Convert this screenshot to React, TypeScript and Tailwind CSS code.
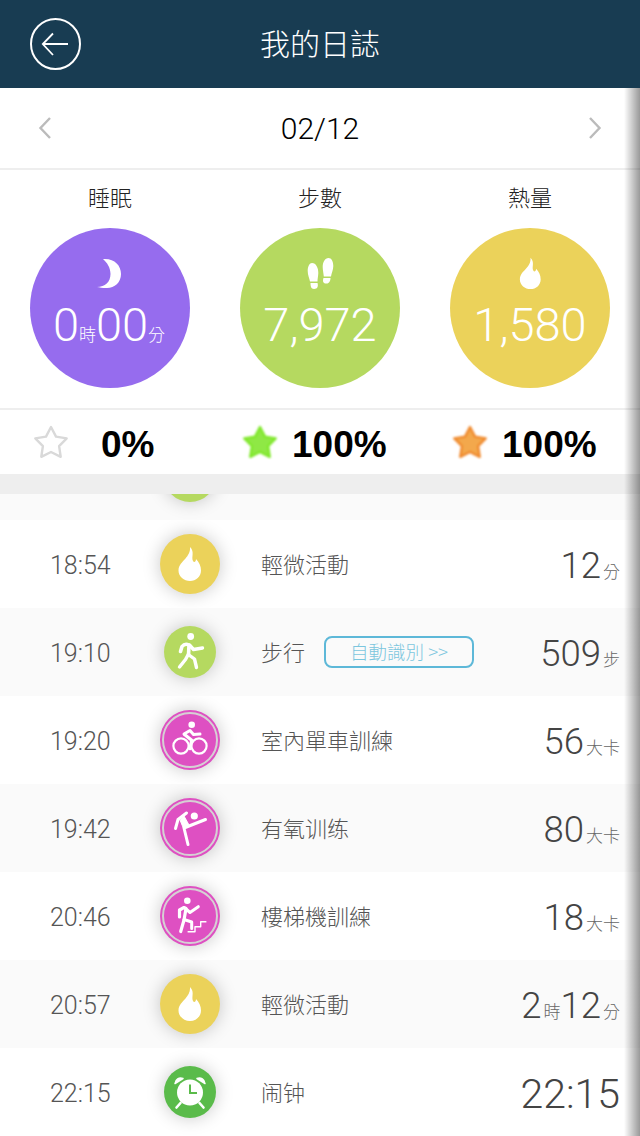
import React from "react";

const SANS = "font-['Roboto','Liberation_Sans','Noto_Sans_CJK_TC',sans-serif]";
const STAR = "M18 3L23 12.6L33.7 14.4L26.100 22.100L27.700 32.800L18 28L8.300 32.800L9.900 22.100L2.300 14.400L13 12.600Z";

const Flame = ({ className }: { className: string }) => (
  <svg viewBox="0 0 40 45" className={className} fill="#fff">
    <path d="M20 7C25 12 21 17 23 21C24 23 26 22 26 19C29 22 31 26 31 30.500C31 36.500 26 41 20 41C14 41 8.500 36.500 8.500 30.500C8.500 25 12.500 22 15.500 18.500C18 15.500 20.500 12 20 7Z" />
  </svg>
);

const Star = ({ fill, stroke, blur }: { fill: string; stroke: string; blur?: boolean }) => (
  <svg viewBox="0 0 36 36" className={`w-[36px] h-[36px] shrink-0 ${blur ? "blur-[0.8px]" : ""}`}>
    <path d={STAR} fill={fill} stroke={stroke} strokeWidth="2.400" strokeLinejoin="round" />
  </svg>
);

const Walk = () => (
  <svg viewBox="0 0 52 52" className="w-[52px] h-[52px]" fill="none" stroke="#fff" strokeWidth="3.400" strokeLinecap="round" strokeLinejoin="round">
    <circle cx="26.700" cy="10.500" r="3.400" fill="#fff" stroke="none" />
    <path d="M16.500 25.500L18 20.500C20 18 23 18 25 19L24.500 29" strokeWidth="3.600" />
    <path d="M25.500 19L29.500 23.500L38.500 22" />
    <path d="M24.500 28L21.500 33.500L15.500 41M25 29L30.500 33L32.500 41.500" />
  </svg>
);

const Bike = () => (
  <svg viewBox="0 0 60 60" className="absolute left-[-4px] top-[-4px] w-[60px] h-[60px]" fill="none" stroke="#fff" strokeWidth="2.200" strokeLinecap="round" strokeLinejoin="round">
    <circle cx="31.700" cy="14.700" r="3.300" fill="#fff" stroke="none" />
    <circle cx="21" cy="36" r="7.600" />
    <circle cx="39" cy="36" r="7.600" />
    <path d="M24 24L30 20.500L33.500 24.500L40 24" strokeWidth="3" />
    <path d="M24.500 24.500L31.700 30.300L30 38.700" strokeWidth="3.200" />
  </svg>
);

const Kick = () => (
  <svg viewBox="0 0 60 60" className="absolute left-[-4px] top-[-4px] w-[60px] h-[60px]" fill="none" stroke="#fff" strokeWidth="3" strokeLinecap="round" strokeLinejoin="round">
    <circle cx="34.300" cy="18" r="3.600" fill="#fff" stroke="none" />
    <path d="M45.500 21.500L24 30L28 46.500" />
    <path d="M26.500 15L18 21.500L15.500 30.500" />
    <path d="M20 22L23.500 30.500L29 27L24 18Z" fill="#fff" strokeWidth="1" />
  </svg>
);

const Stairs = () => (
  <svg viewBox="0 0 60 60" className="absolute left-[-4px] top-[-4px] w-[60px] h-[60px]" fill="none" stroke="#fff" strokeWidth="3" strokeLinecap="round" strokeLinejoin="round">
    <circle cx="27.300" cy="14.700" r="3.300" fill="#fff" stroke="none" />
    <path d="M19.500 31L19.500 24L24 21.500L26 22.500L24 34L20.700 45.500" strokeWidth="3.200" />
    <path d="M26 23L30 26.500L38.300 20.700M24 33.500L31.700 36V42.500" />
    <path d="M28.300 45.700H35V40.700H40.700V35.700H45.700" strokeWidth="1.400" strokeLinecap="square" />
  </svg>
);

const Alarm = () => (
  <svg viewBox="0 0 52 52" className="w-[52px] h-[52px]" fill="none">
    <circle cx="26" cy="26.500" r="13" fill="#fff" />
    <path d="M26 18.500V27H33" stroke="#5abb4a" strokeWidth="2" />
    <path d="M11 17.500C11.500 13.500 15 11 19 12.500ZM41 17.500C40.500 13.500 37 11 33 12.500Z" fill="#fff" stroke="#fff" strokeWidth="1.500" strokeLinejoin="round" />
    <path d="M16.500 37L12.500 41.500M35.500 37L39.500 41.500" stroke="#fff" strokeWidth="2.600" strokeLinecap="round" />
  </svg>
);

const Plain = ({ size, color, children }: { size: "lg" | "sm"; color: "yellow" | "lime" | "green"; children: React.ReactNode }) => (
  <div
    className={`rounded-full flex items-center justify-center shadow-[0_0_18px_rgba(0,0,0,0.22)] ${
      size === "lg" ? "w-[60px] h-[60px]" : "w-[52px] h-[52px]"
    } ${color === "yellow" ? "bg-[#ebd25a]" : color === "lime" ? "bg-[#b5d960]" : "bg-[#5abb4a]"}`}
  >
    {children}
  </div>
);

const Ring = ({ children }: { children: React.ReactNode }) => (
  <div className="w-[60px] h-[60px] rounded-full bg-[#de50c2] flex items-center justify-center shadow-[0_0_18px_rgba(0,0,0,0.22)]">
    <div className="relative w-[56px] h-[56px] rounded-full border-2 border-[#d6d0d4]">{children}</div>
  </div>
);

const Unit = ({ children }: { children: React.ReactNode }) => (
  <span className="ml-[2px] text-[17px] text-[#666] font-['Noto_Sans_CJK_TC',sans-serif] font-light">{children}</span>
);

type Row = { time: string; icon: React.ReactNode; name: string; value: React.ReactNode; badge?: boolean };

const rows: Row[] = [
  {
    time: "18:54",
    icon: <Plain size="lg" color="yellow"><Flame className="mb-[3px] w-[40px] h-[45px]" /></Plain>,
    name: "輕微活動",
    value: <>12<Unit>分</Unit></>,
  },
  {
    time: "19:10",
    icon: <Plain size="sm" color="lime"><Walk /></Plain>,
    name: "步行",
    badge: true,
    value: <>509<Unit>步</Unit></>,
  },
  {
    time: "19:20",
    icon: <Ring><Bike /></Ring>,
    name: "室內單車訓練",
    value: <>56<Unit>大卡</Unit></>,
  },
  {
    time: "19:42",
    icon: <Ring><Kick /></Ring>,
    name: "有氧训练",
    value: <>80<Unit>大卡</Unit></>,
  },
  {
    time: "20:46",
    icon: <Ring><Stairs /></Ring>,
    name: "樓梯機訓練",
    value: <>18<Unit>大卡</Unit></>,
  },
  {
    time: "20:57",
    icon: <Plain size="lg" color="yellow"><Flame className="mb-[3px] w-[40px] h-[45px]" /></Plain>,
    name: "輕微活動",
    value: <>2<Unit>時</Unit>12<Unit>分</Unit></>,
  },
  {
    time: "22:15",
    icon: <Plain size="sm" color="green"><Alarm /></Plain>,
    name: "闹钟",
    value: <span className="text-[41px]">22:15</span>,
  },
];

export default function App() {
  return (
    <div className={`relative w-[640px] h-[1136px] overflow-hidden bg-white ${SANS}`}>
      {/* Header */}
      <header className="relative h-[88px] bg-[#183c52] flex items-center justify-center text-white">
        <div className="absolute left-[30px] top-[18px]">
          <svg viewBox="0 0 52 52" className="w-[52px] h-[52px]" fill="none" stroke="#fff" strokeWidth="2">
            <ellipse cx="25.500" cy="26" rx="24.500" ry="25" />
            <path d="M13 26H38M23 15.500L12.800 26L23 37" strokeWidth="1.800" />
          </svg>
        </div>
        <h1 className="pb-[3px] text-[30px] font-light font-['Noto_Sans_CJK_TC',sans-serif]">我的日誌</h1>
      </header>

      {/* Date bar */}
      <div className="h-[82px] border-b-2 border-[#eeeeee] flex items-center justify-between px-[38px] text-black">
        <svg viewBox="0 0 14 22" className="w-[14px] h-[22px]" fill="none" stroke="#bbb" strokeWidth="2.400"><path d="M12 1L2.500 11L12 21" /></svg>
        <span className="text-[30px] font-light">02/12</span>
        <svg viewBox="0 0 14 22" className="w-[14px] h-[22px]" fill="none" stroke="#bbb" strokeWidth="2.400"><path d="M2 1L11.500 11L2 21" /></svg>
      </div>

      {/* Daily totals */}
      <div className="h-[240px] border-b-2 border-[#eeeeee] grid grid-cols-3 px-[5px]">
        <div className="flex flex-col items-center">
          <p className="mt-[10px] h-[32px] text-[22px] leading-[32px] text-[#222] font-['Noto_Sans_CJK_TC',sans-serif] font-light">睡眠</p>
          <div className="mt-[16px] w-[160px] h-[160px] rounded-full bg-[#966cee] flex flex-col items-center text-white">
            <svg viewBox="0 0 40 45" className="mt-[23px] w-[40px] h-[45px]" fill="#fff">
              <path d="M13 8C24 7 31 14 31 23C31 32 24 37.500 16 37C12.500 37 9.500 36.500 7 36C15 36 20.500 31 20.500 23C20.500 16.500 17 11.500 13 8Z" />
            </svg>
            <p className="mt-[3px] mr-[2px] text-[47px] leading-[52px] font-light whitespace-nowrap">
              0<span className="text-[17px] font-['Noto_Sans_CJK_TC',sans-serif]">時</span>00<span className="text-[17px] font-['Noto_Sans_CJK_TC',sans-serif]">分</span>
            </p>
          </div>
        </div>
        <div className="flex flex-col items-center">
          <p className="mt-[10px] h-[32px] text-[22px] leading-[32px] text-[#222] font-['Noto_Sans_CJK_TC',sans-serif] font-light">步數</p>
          <div className="mt-[16px] w-[160px] h-[160px] rounded-full bg-[#b5d960] flex flex-col items-center text-white">
            <svg viewBox="0 0 40 45" className="mt-[22px] w-[40px] h-[45px]" fill="#fff">
              <path d="M12 13C16 13 18.500 18 18.300 23C18.200 26 17.500 29 17.500 31.500L10 31.500C9.500 28.500 7.700 25 7.700 21C7.700 16.500 9.500 13 12 13Z" />
              <path d="M10.500 33L17.500 33C18.500 36 17.500 39 14 39C11 39 10.500 36 10.500 33Z" />
              <path d="M28.500 8C25 8 22.700 12 22.700 17C22.700 20 23.500 23 23.800 26.500L31 26.500C31.500 23 33.300 20 33.300 16C33.300 11.500 31.500 8 28.500 8Z" />
              <path d="M23.500 28L30.500 28C30.500 31 29 34 26 33.500C23 33.500 22.500 31 23.500 28Z" />
            </svg>
            <p className="mt-[4px] text-[47px] leading-[52px] font-light">7,972</p>
          </div>
        </div>
        <div className="flex flex-col items-center">
          <p className="mt-[10px] h-[32px] text-[22px] leading-[32px] text-[#222] font-['Noto_Sans_CJK_TC',sans-serif] font-light">熱量</p>
          <div className="mt-[16px] w-[160px] h-[160px] rounded-full bg-[#ebd25a] flex flex-col items-center text-white">
            <Flame className="mt-[23px] w-[37px] h-[42px]" />
            <p className="mt-[6px] text-[47px] leading-[52px] font-light">1,580</p>
          </div>
        </div>
      </div>

      {/* Goal completion */}
      <div className="h-[64px] grid grid-cols-3 px-[5px] text-black font-['Liberation_Sans',sans-serif] font-bold text-[37px]">
        <div className="flex items-center pl-[28px]">
          <Star fill="#ffffff" stroke="#d9d9d9" />
          <span className="ml-[32px] pt-[5px]">0%</span>
        </div>
        <div className="flex items-center pl-[27px]">
          <Star fill="#8fe845" stroke="#7fe82a" blur />
          <span className="ml-[14px] pt-[5px]">100%</span>
        </div>
        <div className="flex items-center pl-[27px]">
          <Star fill="#f3a84c" stroke="#f08a2e" blur />
          <span className="ml-[14px] pt-[5px]">100%</span>
        </div>
      </div>
      <div className="h-[20px] bg-[#eeeeee]" />

      {/* Timeline, scrolled */}
      <div className="h-[26px] bg-[#fafafa] overflow-hidden pl-[164px]">
        <div className="mt-[-44px] w-[52px] h-[52px] rounded-full bg-[#b5d960] shadow-[0_0_18px_rgba(0,0,0,0.22)]" />
      </div>
      {rows.map((row, i) => (
        <div
          key={row.time}
          className={`h-[88px] overflow-hidden flex items-center pl-[50px] pr-[20px] ${i % 2 === 1 ? "bg-[#fafafa]" : "bg-white"}`}
        >
          <span className="w-[110px] pt-[4px] text-[25px] font-light text-[#555]">{row.time}</span>
          <div className="w-[60px] flex justify-center">{row.icon}</div>
          <span className="ml-[41px] pb-[2px] text-[22px] text-[#555] font-['Noto_Sans_CJK_TC',sans-serif] font-light whitespace-nowrap">{row.name}</span>
          {row.badge && (
            <span className="ml-[19px] w-[150px] h-[32px] rounded-lg border-2 border-[#5db8d8] flex items-center justify-center text-[18.500px] text-[#7cc6de] font-['Noto_Sans_CJK_TC',sans-serif] font-light">
              自動識別 &gt;&gt;
            </span>
          )}
          <span className="ml-auto pt-[5px] text-[36.500px] font-light text-[#444] whitespace-nowrap">{row.value}</span>
        </div>
      ))}

      {/* Edge shadow of the slide-over panel */}
      <div className="absolute right-0 top-[88px] bottom-0 w-[16px] pointer-events-none bg-gradient-to-r from-black/0 to-black/40" />
    </div>
  );
}
